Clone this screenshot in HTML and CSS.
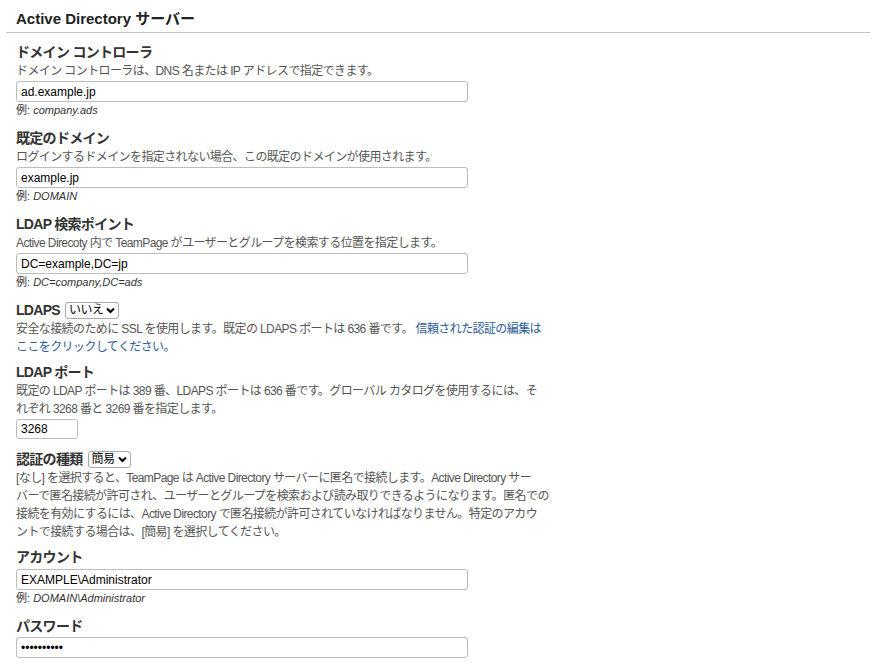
FILE: index.html
```html
<!DOCTYPE html>
<html lang="ja">
<head>
<meta charset="utf-8">
<title>Active Directory サーバー</title>
<link rel="stylesheet" href="styles.css">
</head>
<body>
<div class="page">
  <h2 class="section-title">Active Directory サーバー</h2>
  <div class="fields">
    <div class="field">
      <div class="label">ドメイン コントローラ</div>
      <div class="desc">ドメイン コントローラは、DNS 名または IP アドレスで指定できます。</div>
      <input class="text" type="text" value="ad.example.jp">
      <div class="example">例: <i>company.ads</i></div>
    </div>
    <div class="field">
      <div class="label">既定のドメイン</div>
      <div class="desc">ログインするドメインを指定されない場合、この既定のドメインが使用されます。</div>
      <input class="text" type="text" value="example.jp">
      <div class="example">例: <i>DOMAIN</i></div>
    </div>
    <div class="field">
      <div class="label">LDAP 検索ポイント</div>
      <div class="desc">Active Direcoty 内で TeamPage がユーザーとグループを検索する位置を指定します。</div>
      <input class="text" type="text" value="DC=example,DC=jp">
      <div class="example">例: <i>DC=company,DC=ads</i></div>
    </div>
    <div class="field short">
      <div class="label">LDAPS <span class="select">いいえ<svg class="chev" width="9" height="7" viewBox="0 0 9 7"><path d="M1 1.5 L4.5 5 L8 1.5" fill="none" stroke="#000" stroke-width="2"/></svg></span></div>
      <div class="desc">安全な接続のために SSL を使用します。既定の LDAPS ポートは 636 番です。 <a href="#" class="link">信頼された認証の編集は<br>ここをクリックしてください。</a></div>
    </div>
    <div class="field">
      <div class="label">LDAP ポート</div>
      <div class="desc">既定の LDAP ポートは 389 番、LDAPS ポートは 636 番です。グローバル カタログを使用するには、そ<br>れぞれ 3268 番と 3269 番を指定します。</div>
      <input class="text port" type="text" value="3268">
    </div>
    <div class="field short">
      <div class="label">認証の種類 <span class="select">簡易<svg class="chev" width="9" height="7" viewBox="0 0 9 7"><path d="M1 1.5 L4.5 5 L8 1.5" fill="none" stroke="#000" stroke-width="2"/></svg></span></div>
      <div class="desc">[なし] を選択すると、TeamPage は Active Directory サーバーに匿名で接続します。Active Directory サー<br>バーで匿名接続が許可され、ユーザーとグループを検索および読み取りできるようになります。匿名での<br>接続を有効にするには、Active Directory で匿名接続が許可されていなければなりません。特定のアカウ<br>ントで接続する場合は、[簡易] を選択してください。</div>
    </div>
    <div class="field">
      <div class="label">アカウント</div>
      <input class="text nodesc" type="text" value="EXAMPLE\Administrator">
      <div class="example">例: <i>DOMAIN\Administrator</i></div>
    </div>
    <div class="field">
      <div class="label">パスワード</div>
      <input class="text" type="password" value="..........">
    </div>
  </div>
</div>
</body>
</html>
```

FILE: styles.css
```css
* { box-sizing: border-box; }
html, body {
  margin: 0;
  padding: 0;
  background: #fff;
}
body {
  font-family: "Liberation Sans", Arial, "Noto Sans CJK JP", sans-serif;
  color: #333;
}
.page {
  padding: 0 6px;
}
.section-title {
  margin: 0;
  padding: 10px 0 4px 10px;
  font-size: 15px;
  line-height: 18px;
  font-weight: bold;
  color: #222;
  border-bottom: 1px solid #c4c4c4;
}
.fields {
  padding: 9px 0 0 10px;
  width: 620px;
}
.field {
  display: flex;
  flex-direction: column;
  align-items: flex-start;
  margin-bottom: 10px;
}
.field.short {
  margin-bottom: 6px;
}
.label {
  font-size: 14px;
  line-height: 20px;
  font-weight: bold;
  color: #333;
  letter-spacing: -0.7px;
  display: flex;
  align-items: center;
  gap: 5px;
}
.desc {
  font-size: 12px;
  line-height: 18px;
  color: #555;
  letter-spacing: -0.6px;
  white-space: nowrap;
}
.link {
  color: #2d5d96;
  text-decoration: none;
}
.text {
  margin: 1px 0 0 0;
  width: 452px;
  height: 21px;
  padding: 0 4px;
  border: 1px solid #bdbdbd;
  border-radius: 3px;
  font-family: "Liberation Sans", Arial, sans-serif;
  font-size: 12px;
  color: #000;
  background: #fff;
  outline: none;
}
.text.nodesc {
  margin-top: 2px;
}
.text.port {
  width: 62px;
  height: 20px;
}
.example {
  font-size: 11px;
  line-height: 16px;
  color: #333;
}
.example i {
  font-style: italic;
}
.select {
  display: inline-flex;
  align-items: center;
  gap: 3px;
  height: 17px;
  padding: 0 3px;
  border: 1px solid #a8a8a8;
  border-radius: 3px;
  font-size: 12px;
  font-weight: normal;
  letter-spacing: -0.5px;
  color: #000;
  line-height: 15px;
  background: #fff;
}
.chev {
  display: block;
}
```
